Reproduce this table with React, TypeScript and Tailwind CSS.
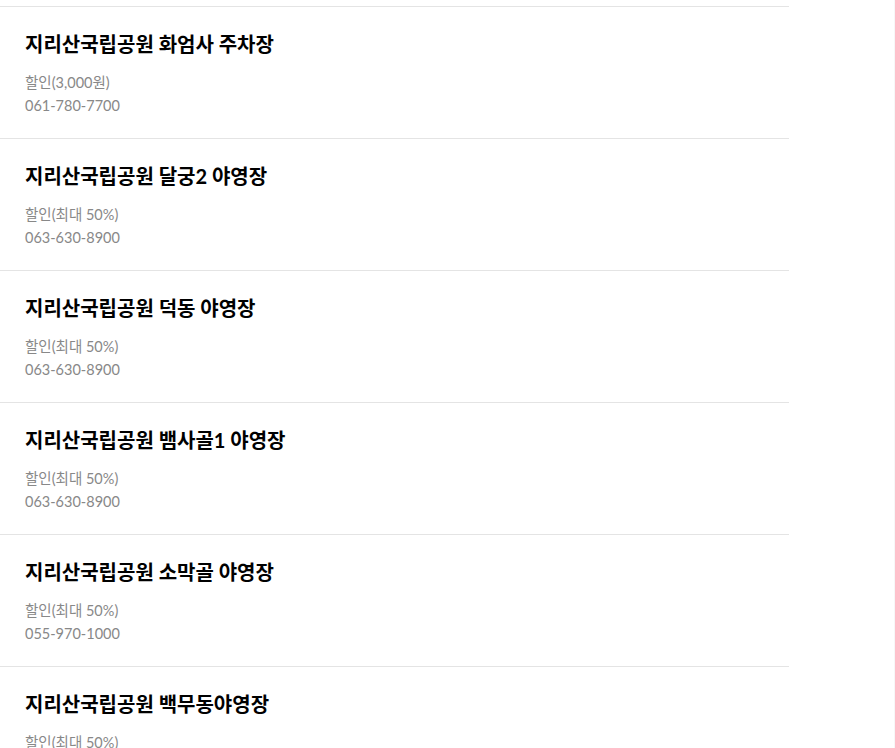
const places = [
  { name: '지리산국립공원 화엄사 주차장', discount: '할인(3,000원)', tel: '061-780-7700' },
  { name: '지리산국립공원 달궁2 야영장', discount: '할인(최대 50%)', tel: '063-630-8900' },
  { name: '지리산국립공원 덕동 야영장', discount: '할인(최대 50%)', tel: '063-630-8900' },
  { name: '지리산국립공원 뱀사골1 야영장', discount: '할인(최대 50%)', tel: '063-630-8900' },
  { name: '지리산국립공원 소막골 야영장', discount: '할인(최대 50%)', tel: '055-970-1000' },
  { name: '지리산국립공원 백무동야영장', discount: '할인(최대 50%)', tel: '055-970-1000' },
]

export default function App() {
  return (
    <div className="flex h-[748px] w-[895px] overflow-hidden bg-white font-['Lato','Noto_Sans_CJK_KR',sans-serif]">
      <ul className="w-[789px] shrink-0 pt-[6px]">
        {places.map((p) => (
          <li key={p.name} className="border-t border-[#e4e4e4] px-[25px] pt-6 pb-[21px]">
            <h3 className="text-[20px] font-bold leading-[27px] text-black">{p.name}</h3>
            <div className="mt-[13px] text-[14.5px] leading-[23px] text-[#888]">
              <p>{p.discount}</p>
              <p>{p.tel}</p>
            </div>
          </li>
        ))}
      </ul>
      <div className="flex-1" />
      <div className="w-px bg-[#f7f7f7]" />
    </div>
  )
}
